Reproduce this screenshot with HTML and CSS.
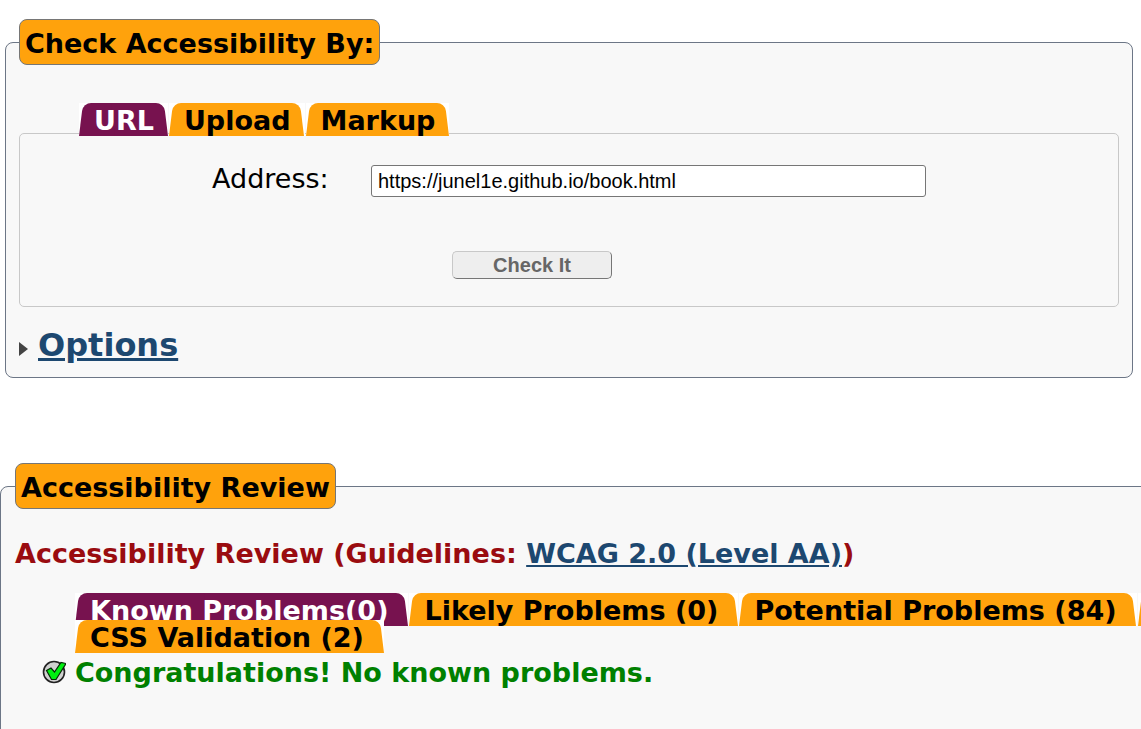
FILE: index.html
```html
<!DOCTYPE html>
<html lang="en">
<head>
<meta charset="utf-8">
<title>Accessibility Checker</title>
<link rel="stylesheet" href="styles.css">
</head>
<body>
<form class="checker" action="#">
  <fieldset class="panel">
    <legend class="panel-title">Check Accessibility By:</legend>
    <nav class="tabs tabs-input">
      <a class="tab active" href="#url">URL</a>
      <a class="tab" href="#upload">Upload</a>
      <a class="tab" href="#markup">Markup</a>
    </nav>
    <div class="input-box" id="url">
      <div class="field">
        <label for="address">Address:</label>
        <input class="address" id="address" type="text" value="https://junel1e.github.io/book.html">
      </div>
      <button class="check" type="submit">Check It</button>
    </div>
    <h2 class="options">
      <svg class="arrow" viewBox="0 0 9 14" aria-hidden="true"><path d="M0 0L9 7L0 14Z" fill="#444"/></svg>
      <a href="#options">Options</a>
    </h2>
  </fieldset>
</form>
<section class="review">
  <fieldset class="panel review-panel">
    <legend class="panel-title">Accessibility Review</legend>
    <h3 class="guidelines">Accessibility Review (Guidelines: <a href="#wcag">WCAG 2.0 (Level AA)</a>)</h3>
    <nav class="tabs tabs-review">
      <a class="tab active" href="#known">Known Problems(0)</a>
      <a class="tab" href="#likely">Likely Problems (0)</a>
      <a class="tab" href="#potential">Potential Problems (84)</a>
      <span class="tab tab-more"></span>
      <a class="tab" href="#css">CSS Validation (2)</a>
    </nav>
    <p class="result" id="known">
      <svg class="tick" viewBox="0 0 24 24" aria-hidden="true">
        <circle cx="12" cy="12" r="10.5" fill="#d0d0d0" stroke="#222" stroke-width="1.6"/>
        <path d="M4.5 10.5L9 8L12.5 12L19 2.5L24 3.5L14 19.5L9.5 19.5Z" fill="#00f010" stroke="#062806" stroke-width="1.2"/>
      </svg>
      <span>Congratulations! No known problems.</span>
    </p>
  </fieldset>
</section>
</body>
</html>
```
FILE: styles.css
```css
* {
  box-sizing: border-box;
}

body {
  margin: 0;
  background: #fff;
  color: #000;
  font-family: Verdana, "DejaVu Sans", sans-serif;
  font-size: 27px;
  line-height: 32px;
  overflow: hidden;
}

a {
  color: #1d4870;
}

.checker {
  padding: 19px 8px 0 5px;
}

.panel {
  min-width: 0;
  margin: 0;
  padding: 0 13px 12px;
  border: 1px solid #6c7686;
  border-radius: 8px;
  background: #f8f8f8;
}

.panel-title {
  padding: 8px 5px 4px;
  border: 1px solid #767676;
  border-radius: 8px;
  background: #ffa20c;
  font-weight: bold;
}

.tabs {
  display: flex;
  flex-wrap: wrap;
  padding-left: 60px;
  font-weight: bold;
  position: relative;
}

.tab {
  position: relative;
  z-index: 0;
  height: 33px;
  margin: 0 1px -6px 0;
  padding: 2px 14px 0 15px;
  background: #fff;
  color: #000;
  text-decoration: none;
  white-space: nowrap;
}

.tab::before,
.tab::after {
  content: "";
  position: absolute;
  z-index: -1;
  top: 0;
  bottom: 0;
  width: 60%;
  background: #ffa20c;
}

.tab::before {
  left: 0;
  border-top-left-radius: 8px;
  transform: skewX(-7deg);
  transform-origin: bottom left;
}

.tab::after {
  right: 0;
  border-top-right-radius: 8px;
  transform: skewX(7deg);
  transform-origin: bottom right;
}

.tab.active {
  color: #fff;
}

.tab.active::before,
.tab.active::after {
  background: #77124f;
}

.tabs-input {
  padding-top: 38px;
}

.tabs-review .tab {
  padding-right: 20px;
}

.input-box {
  margin-top: 3px;
  padding: 31px 0 27px;
  border: 1px solid #c8c8c8;
  border-radius: 5px;
}

.field {
  display: flex;
  gap: 40px;
  padding-left: 192px;
}

.field label {
  width: 119px;
  line-height: 28px;
}

.address {
  max-width: 100%;
  flex: 0 1 555px;
  height: 32px;
  padding: 1px 6px;
  border: 1px solid #767676;
  border-radius: 3px;
  background: #fff;
  color: #000;
  font: 20px "Liberation Sans", Arial, sans-serif;
}

.check {
  display: block;
  width: 160px;
  height: 28px;
  margin: 54px 0 0 432px;
  padding: 0;
  border: 1px solid;
  border-color: #c8c8c8 #767676 #767676 #c8c8c8;
  border-radius: 5px;
  background: #eee;
  color: #666;
  font: bold 20px "Liberation Sans", Arial, sans-serif;
}

.options {
  display: flex;
  align-items: center;
  gap: 10px;
  margin: 18px 0 0;
  font-size: 32px;
  line-height: 40px;
}

.arrow {
  width: 9px;
  height: 14px;
  margin-top: 8px;
}

.review {
  margin: 85px -60px 0 0;
}

.review-panel {
  padding-left: 14px;
  padding-bottom: 80px;
}

.guidelines {
  margin: 29px 0 23px;
  color: #9a0c10;
  font-size: 27px;
}

.tab-more {
  width: 40px;
}

.result {
  display: flex;
  align-items: center;
  gap: 9px;
  margin: 10px 0 0 27px;
  color: #008000;
  font-weight: bold;
}

.tick {
  width: 24px;
  height: 24px;
  margin-bottom: 2px;
}
```
